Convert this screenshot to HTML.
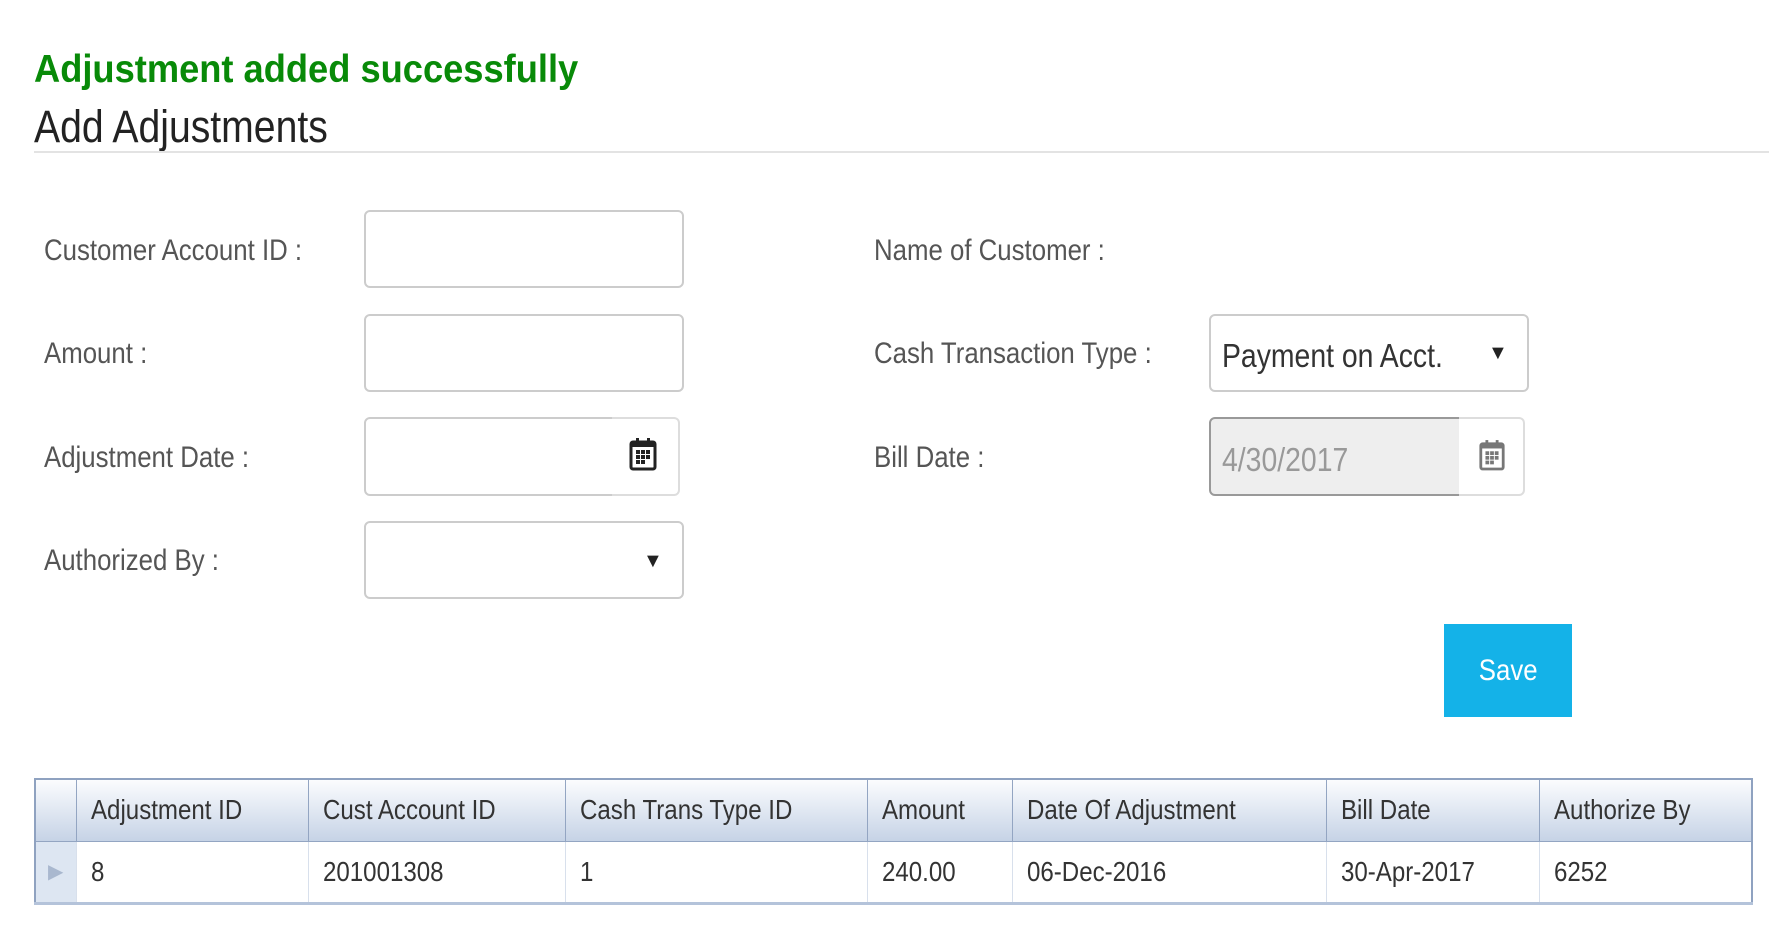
<!DOCTYPE html>
<html><head><meta charset="utf-8"><style>
*{box-sizing:border-box;margin:0;padding:0}
body{width:1769px;height:928px;background:#fff;position:relative;overflow:hidden;font-family:"Liberation Sans",sans-serif;color:#555}
.a{position:absolute;white-space:nowrap}
.s{display:inline-block;transform:scaleX(.86);transform-origin:left center}
.lbl{font-size:30px;color:#555;line-height:34px}
.box{position:absolute;border:2px solid #ccc;border-radius:6px;background:#fff}
.addon{position:absolute;border:2px solid #ddd;border-left:none;border-radius:0 6px 6px 0;background:#fff}
table{position:absolute;left:34px;top:778px;width:1719px;border-collapse:collapse;table-layout:fixed;border:2px solid #8fa2c0;font-size:28px;color:#333}
th{height:62px;text-align:left;font-weight:normal;background:linear-gradient(#fbfcfe,#c6d3e6);border:1.5px solid #93a5c2;padding-left:14px;overflow:hidden}
td{height:62px;border:1.5px solid #d8e0ec;border-bottom:3px solid #b4c3da;padding-left:14px}
</style></head><body>
<div class="a" style="left:34px;top:46px;font-size:39px;font-weight:bold;color:#088a08;line-height:48px"><span class="s" style="transform:scaleX(.93)">Adjustment added successfully</span></div>
<div class="a" style="left:34px;top:101px;font-size:45px;color:#222;line-height:52px"><span class="s" style="transform:scaleX(.87)">Add Adjustments</span></div>
<div class="a" style="left:34px;top:151px;width:1735px;height:2px;background:#e3e3e3"></div>

<div class="a lbl" style="left:44px;top:234px"><span class="s">Customer Account ID :</span></div>
<div class="box" style="left:364px;top:210px;width:320px;height:78px"></div>
<div class="a lbl" style="left:44px;top:337px"><span class="s">Amount :</span></div>
<div class="box" style="left:364px;top:314px;width:320px;height:78px"></div>
<div class="a lbl" style="left:44px;top:441px"><span class="s">Adjustment Date :</span></div>
<div class="box" style="left:364px;top:417px;width:250px;height:79px;border-radius:6px 0 0 6px"></div>
<div class="addon" style="left:612px;top:417px;width:68px;height:79px"></div>
<svg class="a" style="left:628px;top:436px" width="30" height="36" viewBox="0 0 30 36"><rect x="3" y="6" width="24" height="27" rx="2" fill="none" stroke="#222" stroke-width="3"/><rect x="3" y="6" width="24" height="5" fill="#222"/><rect x="8" y="2" width="3" height="6" fill="#222"/><rect x="19" y="2" width="3" height="6" fill="#222"/><g fill="#222"><rect x="8" y="14" width="4" height="4"/><rect x="13" y="14" width="4" height="4"/><rect x="18" y="14" width="4" height="4"/><rect x="8" y="19" width="4" height="4"/><rect x="13" y="19" width="4" height="4"/><rect x="18" y="19" width="4" height="4"/><rect x="8" y="24" width="4" height="4"/><rect x="13" y="24" width="4" height="4"/></g></svg>
<div class="a lbl" style="left:44px;top:544px"><span class="s">Authorized By :</span></div>
<div class="box" style="left:364px;top:521px;width:320px;height:78px"></div>
<div class="a" style="left:643px;top:550px;font-size:20px;color:#222">▼</div>

<div class="a lbl" style="left:874px;top:234px"><span class="s">Name of Customer :</span></div>
<div class="a lbl" style="left:874px;top:337px"><span class="s">Cash Transaction Type :</span></div>
<div class="box" style="left:1209px;top:314px;width:320px;height:78px"></div>
<div class="a" style="left:1222px;top:336px;font-size:33px;color:#333;line-height:40px"><span class="s">Payment on Acct.</span></div>
<div class="a" style="left:1488px;top:342px;font-size:20px;color:#222">▼</div>
<div class="a lbl" style="left:874px;top:441px"><span class="s">Bill Date :</span></div>
<div class="box" style="left:1209px;top:417px;width:252px;height:79px;border-radius:6px 0 0 6px;background:#eee;border-color:#999"></div>
<div class="a" style="left:1222px;top:440px;font-size:33px;color:#999;line-height:40px"><span class="s">4/30/2017</span></div>
<div class="addon" style="left:1459px;top:417px;width:66px;height:79px"></div>
<svg class="a" style="left:1478px;top:438px" width="28" height="34" viewBox="0 0 30 36"><rect x="3" y="6" width="24" height="27" rx="2" fill="none" stroke="#777" stroke-width="3"/><rect x="3" y="6" width="24" height="5" fill="#777"/><rect x="8" y="2" width="3" height="6" fill="#777"/><rect x="19" y="2" width="3" height="6" fill="#777"/><g fill="#777"><rect x="8" y="14" width="4" height="4"/><rect x="13" y="14" width="4" height="4"/><rect x="18" y="14" width="4" height="4"/><rect x="8" y="19" width="4" height="4"/><rect x="13" y="19" width="4" height="4"/><rect x="18" y="19" width="4" height="4"/><rect x="8" y="24" width="4" height="4"/><rect x="13" y="24" width="4" height="4"/></g></svg>

<div class="a" style="left:1444px;top:624px;width:128px;height:93px;background:#14b2e8;color:#fff;font-size:30px;line-height:93px;text-align:center"><span class="s" style="transform-origin:center">Save</span></div>

<table>
<colgroup><col style="width:41px"><col style="width:232px"><col style="width:257px"><col style="width:302px"><col style="width:145px"><col style="width:314px"><col style="width:213px"><col></colgroup>
<tr><th style="padding:0"></th><th><span class="s">Adjustment ID</span></th><th><span class="s">Cust Account ID</span></th><th><span class="s">Cash Trans Type ID</span></th><th><span class="s">Amount</span></th><th><span class="s">Date Of Adjustment</span></th><th><span class="s">Bill Date</span></th><th><span class="s">Authorize By</span></th></tr>
<tr><td style="padding:0;background:#dde6f2;text-align:center;color:#a9b8cf;font-size:20px">▶</td><td><span class="s">8</span></td><td><span class="s">201001308</span></td><td><span class="s">1</span></td><td><span class="s">240.00</span></td><td><span class="s">06-Dec-2016</span></td><td><span class="s">30-Apr-2017</span></td><td><span class="s">6252</span></td></tr>
</table>
</body></html>
